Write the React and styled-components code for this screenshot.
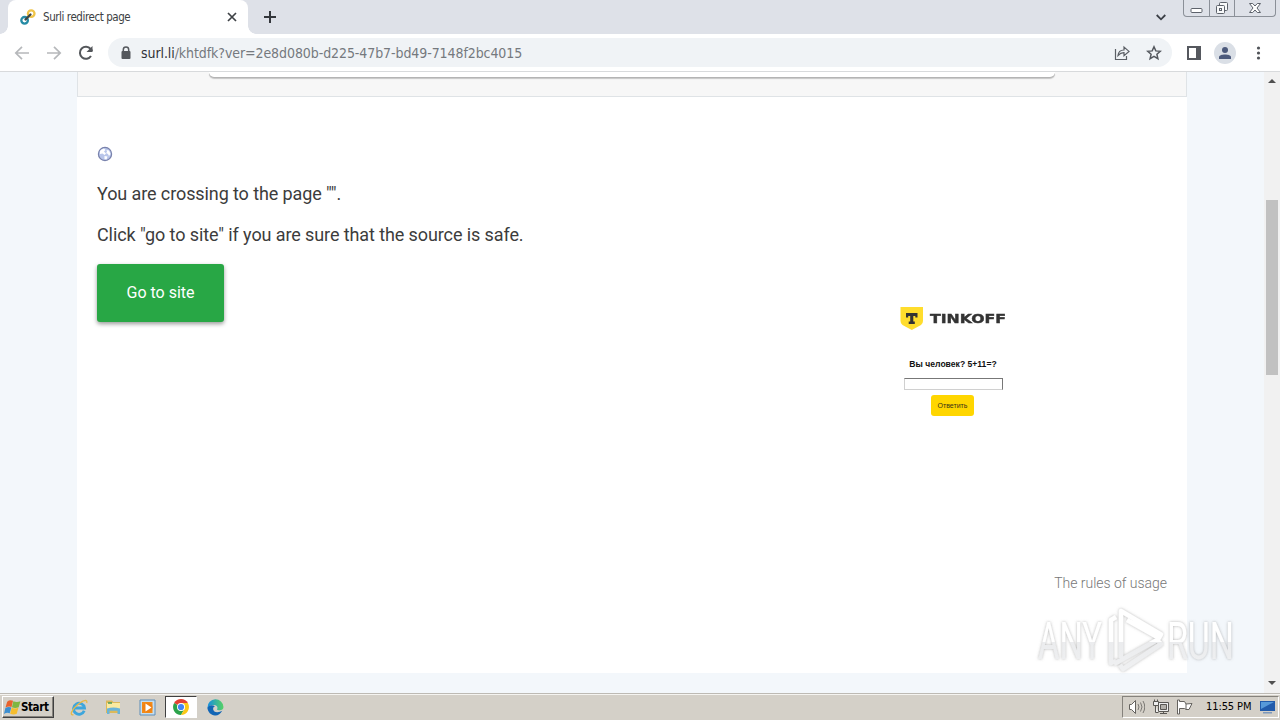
import React from "react";
import styled, { createGlobalStyle } from "styled-components";

const Global = createGlobalStyle`
  * { box-sizing: border-box; }
  body { margin: 0; background: #f3f7fb; overflow: hidden; }
  svg { display: block; flex: none; }
`;

const ui = `"DejaVu Sans Condensed", "DejaVu Sans", "Noto Sans", sans-serif`;

const Screen = styled.div`
  width: 1280px;
  height: 720px;
  display: flex;
  flex-direction: column;
  position: relative;
  overflow: hidden;
  font-family: Roboto, sans-serif;
`;

const TabStrip = styled.header`
  height: 34px;
  flex: none;
  display: flex;
  background: #dee1e8;
  padding-left: 8px;
`;
const Tab = styled.div`
  width: 240px;
  height: 34px;
  display: flex;
  align-items: center;
  padding: 0 10px 0 12px;
  background: #fff;
  border-radius: 8px 8px 0 0;
  position: relative;
  &::before, &::after {
    content: "";
    position: absolute;
    bottom: 0;
    width: 8px;
    height: 8px;
  }
  &::before { left: -8px; background: radial-gradient(circle at 0 0, transparent 7.5px, #fff 8px); }
  &::after { right: -8px; background: radial-gradient(circle at 100% 0, transparent 7.5px, #fff 8px); }
`;
const TabTitle = styled.span`
  flex: 1;
  margin-left: 7px;
  font: 11.5px/16px ${ui};
  letter-spacing: -0.43px;
  color: #3c4043;
  white-space: nowrap;
`;
const NewTab = styled.div`
  padding: 11px 0 0 16px;
  flex: 1;
`;
const Chevron = styled.div`
  padding: 14px 17px 0 0;
`;
const WindowButtons = styled.div`
  display: flex;
  width: 93px;
  height: 17px;
  margin-right: 4px;
  border: 1px solid #8b9098;
  border-top: 0;
  border-radius: 0 0 4px 4px;
`;
const WindowButton = styled.div`
  width: ${(p) => p.$w}px;
  display: flex;
  justify-content: center;
  border-right: ${(p) => (p.$last ? "0" : "1px solid #8b9098")};
`;

const Toolbar = styled.div`
  height: 38px;
  flex: none;
  display: flex;
  align-items: center;
  background: #fff;
  border-bottom: 1px solid #d8dadc;
  padding: 0 12px 0 14px;
`;
const Nav = styled.div`
  display: flex;
  gap: 16px;
  width: 94px;
`;
const AddressBar = styled.div`
  width: 1064px;
  height: 29px;
  display: flex;
  align-items: center;
  background: #f0f3f6;
  border-radius: 15px;
  padding: 0 10px 0 12px;
`;
const Url = styled.span`
  flex: 1;
  margin-left: 9px;
  font: 14px/20px ${ui};
  letter-spacing: -0.08px;
  color: #75797e;
  white-space: nowrap;
  b { font-weight: 400; color: #303236; }
`;
const AddressActions = styled.div`
  display: flex;
  gap: 16px;
`;
const ToolActions = styled.div`
  display: flex;
  align-items: center;
  flex: 1;
  justify-content: space-between;
  padding-left: 14px;
`;
const Avatar = styled.div`
  width: 22px;
  height: 22px;
  border-radius: 50%;
  background: #dadfe6;
  display: flex;
  align-items: center;
  justify-content: center;
`;

const Viewport = styled.main`
  height: 621px;
  flex: none;
  display: flex;
  background: #f3f7fb;
`;
const Page = styled.div`
  width: 1110px;
  height: 601px;
  margin: 0 77px;
  background: #fff;
  flex: none;
`;
const SearchPanel = styled.div`
  height: 25px;
  background: #f7f7f7;
  border: 1px solid #dfe3e6;
  border-top: 0;
  padding: 0 131px;
`;
const SearchEdge = styled.div`
  height: 5px;
  background: #fff;
  border-radius: 0 0 5px 5px;
  box-shadow: 0 1px 0 #b4b4b4, 0 2px 1px #c6c6c6;
`;
const Body = styled.div`
  display: flex;
  justify-content: space-between;
  padding: 49px 20px 0;
`;
const Message = styled.section`
  width: 520px;
`;
const Line = styled.p`
  margin: 0 0 14px;
  font-size: 18px;
  line-height: 27px;
  letter-spacing: -0.1px;
  color: #3c3c3c;
  white-space: nowrap;
`;
const GlobeRow = styled.div`
  height: 34px;
`;
const GoButton = styled.button`
  display: block;
  width: 127px;
  height: 58px;
  margin-top: 16px;
  padding: 0;
  border: 0;
  border-radius: 3px;
  background: #28a745;
  color: #fff;
  font: 16px/24px Roboto, sans-serif;
  box-shadow: 0 2px 4px rgba(0, 0, 0, 0.4);
`;
const Preview = styled.section`
  width: 428px;
  height: 426px;
  padding-top: 161px;
  display: flex;
  flex-direction: column;
  align-items: center;
  font-family: "Liberation Sans", sans-serif;
`;
const Brand = styled.div`
  display: flex;
  align-items: center;
  gap: 6px;
  width: 106px;
  height: 24px;
`;
const BrandName = styled.span`
  font: 700 12px/24px "DejaVu Sans", sans-serif;
  -webkit-text-stroke: 0.4px #333;
  color: #333;
  transform-origin: left center;
  transform: scaleX(1.31);
`;
const Question = styled.div`
  margin-top: 27px;
  font-size: 8.6px;
  line-height: 12px;
  font-weight: 700;
  color: #111;
  white-space: nowrap;
`;
const AnswerField = styled.div`
  width: 99px;
  height: 12px;
  margin-top: 8px;
  border: 1px solid #d0d0d0;
  border-top-color: #777;
  border-right-color: #777;
`;
const AnswerButton = styled.button`
  width: 43px;
  height: 21px;
  margin: 5px 1px 0 0;
  padding: 0;
  border: 0;
  border-radius: 3px;
  background: #ffd600;
  color: #3b3416;
  font: 7px/21px "Liberation Sans", sans-serif;
`;
const Rules = styled.div`
  padding: 2px 20px 0;
  text-align: right;
  font-size: 14px;
  line-height: 18px;
  font-weight: 300;
  letter-spacing: -0.02px;
  color: #777;
`;
const ScrollTrack = styled.div`
  width: 16px;
  height: 621px;
  background: #f1f1f1;
  display: flex;
  flex-direction: column;
  align-items: center;
  padding: 7px 0 8px;
`;
const Thumb = styled.div`
  width: 12px;
  height: 175px;
  margin: 117px 0 auto;
  background: #c1c1c1;
`;

const Watermark = styled.div`
  position: absolute;
  left: 1030px;
  top: 600px;
  width: 210px;
  height: 80px;
`;

const Taskbar = styled.footer`
  height: 27px;
  flex: none;
  display: flex;
  align-items: flex-start;
  background: #d4d0c8;
  border-top: 1px solid #bdbab4;
  box-shadow: inset 0 1px #f5f4f1;
  padding: 2px 1px 0 2px;
`;
const Start = styled.div`
  width: 52px;
  height: 22px;
  display: flex;
  align-items: center;
  gap: 0;
  padding-left: 1px;
  border: 1px solid;
  border-color: #fff #404040 #404040 #fff;
  box-shadow: inset -1px -1px #86837d;
  font: 700 11.5px/16px ${ui};
  letter-spacing: -0.4px;
  color: #000;
`;
const Pinned = styled.div`
  display: flex;
  margin-left: 8px;
  flex: 1;
`;
const TaskItem = styled.div`
  width: ${(p) => (p.$active ? 32 : 34)}px;
  margin-right: ${(p) => (p.$active ? 1 : 0)}px;
  margin-left: ${(p) => (p.$active ? 1 : 0)}px;
  height: 22px;
  display: flex;
  align-items: center;
  justify-content: center;
  border: ${(p) => (p.$active ? "1px solid" : "0")};
  border-color: #404040 #fff #fff #404040;
  background: ${(p) => (p.$active ? "#fff" : "transparent")};
`;
const Tray = styled.div`
  width: 157px;
  height: 22px;
  display: flex;
  align-items: center;
  border: 1px solid;
  border-color: #85827c #fff #fff #85827c;
  padding: 0 3px 0 6px;
  gap: 8px;
`;
const Clock = styled.span`
  flex: 1;
  margin-left: 5px;
  font: 11px/16px ${ui};
  letter-spacing: -0.1px;
  color: #000;
  white-space: nowrap;
`;

const Arrow = ({ flip }) => (
  <svg width="16" height="16" viewBox="0 0 16 16" fill="none" stroke="#b6b8bb" strokeWidth="1.7" transform={flip ? "scale(-1 1)" : undefined}>
    <path d="M15 8H2M8 1.8 1.8 8 8 14.2" />
  </svg>
);

const Favicon = () => (
  <svg width="16" height="16" viewBox="0 0 16 16" fill="none">
    <circle cx="11.2" cy="4.6" r="3.3" stroke="#efc449" strokeWidth="2.3" />
    <circle cx="4.6" cy="11.3" r="3.3" stroke="#258ba5" strokeWidth="2.3" />
    <path d="m5.500 10.500 5-5" stroke="#3e4646" strokeWidth="2.3" strokeLinecap="round" />
  </svg>
);

const Flag = () => (
  <svg width="17" height="17" viewBox="0 0 16 16">
    <path d="M3 2.500Q5.500.4 8.500 1.700L7.100 7.500Q4.300 6.400 1.400 8.100z" fill="#e8622d" />
    <path d="M8.800 2Q12 3.500 15.500 2L13.800 7.700Q10.500 9.200 7.500 7.700z" fill="#7fb641" />
    <path d="M1.300 8.500Q4 6.800 6.900 7.900L5.400 13.300Q2.700 12.200 0 14z" fill="#3c8ed0" />
    <path d="M7.300 8.100Q10.400 9.700 13.600 8.100L12 13.900Q8.900 15.300 5.800 13.800z" fill="#f5bd2d" />
  </svg>
);

const Explorer = () => (
  <svg width="18" height="17" viewBox="0 0 18 17" fill="none">
    <path d="M14.2 11.700A5.500 5.500 0 1 1 14.500 9H5" stroke="#3ea6dc" strokeWidth="2.800" />
    <path d="M3.400 15.700C-.4 17 1 11.200 7 6.200S18-.2 16.700 4" stroke="#e7b946" strokeWidth="1.300" />
  </svg>
);
const Folder = () => (
  <svg width="17" height="16" viewBox="0 0 17 16">
    <path d="M1 3V1.500h6L8.300 3H15v11H1z" fill="#dcb95a" />
    <path d="M2 4h13v7H2z" fill="#faeaa0" />
    <path d="M3 4h4" stroke="#4e9c58" strokeWidth="1.5" />
    <path d="M2 15V9.500Q8.500 7.500 15 9.500V15h-2.500v-3.200h-8V15z" fill="#69b4d9" />
  </svg>
);
const Player = () => (
  <svg width="17" height="17" viewBox="0 0 17 17">
    <path d="M1 1h15v15H1z" fill="#c5def0" stroke="#5e8eb9" />
    <path d="M3 3h10.500v11H3z" fill="#f38b18" />
    <circle cx="8.500" cy="8.500" r="5" fill="#f08215" />
    <path d="m6.500 4.500 6 4-6 4z" fill="#fff" />
  </svg>
);
const Chrome = () => (
  <svg width="16" height="16" viewBox="0 0 16 16">
    <path d="M8 8 1.1 4A8 8 0 0 1 14.9 4z" fill="#e34133" />
    <path d="M8 8 1.1 4A8 8 0 0 0 8 16l3.500-6z" fill="#2ca34b" />
    <path d="M8 4h6.900A8 8 0 0 1 8 16l3.500-6z" fill="#fbc816" />
    <circle cx="8" cy="8" r="4" fill="#fff" />
    <circle cx="8" cy="8" r="3.1" fill="#4285f4" />
  </svg>
);
const Edge = () => (
  <svg width="17" height="17" viewBox="0 0 17 17">
    <defs>
      <linearGradient id="edgeTop" x1="0" x2="1"><stop stopColor="#168ee0" /><stop offset="1" stopColor="#56d264" /></linearGradient>
    </defs>
    <path d="M.5 8.5A8 8 0 0 1 16.5 8c0 3-3 3.8-5.8 3-1-.3-.6-.8-.3-1.6C11 7 8.5 5.5 5.5 6 2.8 6.4 1 7.5.5 10z" fill="url(#edgeTop)" />
    <path d="M.5 9C1.5 6.2 5.2 5.4 8 7.2c-3 .7-2.5 6 2.2 6 2 0 3.6-.5 5-1.4C13.5 15.3 10.8 16.7 8 16.5 4 16.2.7 13 .5 9z" fill="#1265b5" />
  </svg>
);

export default function App() {
  return (
    <Screen>
      <Global />
      <TabStrip>
        <Tab>
          <Favicon />
          <TabTitle>Surli redirect page</TabTitle>
          <svg width="12" height="12" viewBox="0 0 12 12" stroke="#3e4246" strokeWidth="1.7"><path d="m2 2 8 8M10 2l-8 8" /></svg>
        </Tab>
        <NewTab>
          <svg width="12" height="12" viewBox="0 0 12 12" stroke="#34373c" strokeWidth="2"><path d="M0 6h12M6 0v12" /></svg>
        </NewTab>
        <Chevron>
          <svg width="10" height="7" viewBox="0 0 10 7" fill="none" stroke="#3c4047" strokeWidth="1.8"><path d="m.7 1 4.3 4.3L9.3 1" /></svg>
        </Chevron>
        <WindowButtons>
          <WindowButton $w={26}>
            <svg width="13" height="16" viewBox="0 0 13 16"><rect x="1" y="8.5" width="11" height="4" rx="1" fill="#fff" stroke="#5d626b" /></svg>
          </WindowButton>
          <WindowButton $w={25}>
            <svg width="14" height="16" viewBox="0 0 14 16" fill="#f8f9fa" stroke="#5d626b"><rect x="4.5" y="2.5" width="8" height="8" rx="1" /><rect x="1.5" y="5.5" width="8" height="8" rx="1" /><rect x="4.5" y="8.5" width="2" height="2" /></svg>
          </WindowButton>
          <WindowButton $w={40} $last>
            <svg width="14" height="16" viewBox="0 0 14 16" fill="#fff" stroke="#5d626b"><path d="M1.5 3.5h3.2L7 6l2.3-2.5h3.2L9 8l3.5 4.5H9.3L7 10l-2.3 2.5H1.5L5 8z" /></svg>
          </WindowButton>
        </WindowButtons>
      </TabStrip>
      <Toolbar>
        <Nav>
          <Arrow />
          <Arrow flip />
          <svg width="16" height="16" viewBox="0 0 16 16" fill="none" stroke="#54575b" strokeWidth="2"><path d="M13 11A6 6 0 1 1 12.6 4L14.3 6" /><path d="M14.5 1v6h-6z" fill="#54575b" stroke="none" /></svg>
        </Nav>
        <AddressBar>
          <svg width="12" height="14" viewBox="0 0 12 14"><path d="M3.3 6V3.8a2.7 2.7 0 0 1 5.4 0V6" fill="none" stroke="#55585d" strokeWidth="1.5" /><rect x="1.5" y="5" width="9" height="8" rx="1" fill="#55585d" /></svg>
          <Url><b>surl.li</b>/khtdfk?ver=2e8d080b-d225-47b7-bd49-7148f2bc4015</Url>
          <AddressActions>
            <svg width="16" height="16" viewBox="0 0 16 16" fill="none" stroke="#5b5f65" strokeWidth="1.2"><path d="M1.5 4v10.5h11V11" /><path d="M4 10.5Q4.5 5 10 5V2l5 4.4-5 4.2v-3Q6.5 7.5 4 10.5z" /></svg>
            <svg width="16" height="16" viewBox="0 0 16 16" fill="none" stroke="#54585e" strokeWidth="1.5"><path d="m8 1.8 1.8 4.1 4.5.4-3.4 3 1 4.4L8 11.4l-3.9 2.3 1-4.4-3.4-3 4.5-.4z" /></svg>
          </AddressActions>
        </AddressBar>
        <ToolActions>
          <svg width="16" height="14" viewBox="0 0 16 14"><rect x="2" y="1" width="12" height="12" fill="#fff" stroke="#55585e" strokeWidth="2" /><path d="M10 1h5v12h-5z" fill="#55585e" /></svg>
          <Avatar>
            <svg width="14" height="14" viewBox="0 0 14 14" fill="#4c5a7c"><circle cx="7" cy="4" r="3" /><path d="M1 13v-2c0-3.5 12-3.5 12 0v2z" /></svg>
          </Avatar>
          <svg width="20" height="14" viewBox="0 0 20 14" fill="#505358"><circle cx="10.500" cy="2" r="1.6" /><circle cx="10.500" cy="7" r="1.6" /><circle cx="10.500" cy="12" r="1.6" /></svg>
        </ToolActions>
      </Toolbar>
      <Viewport>
        <Page>
          <SearchPanel><SearchEdge /></SearchPanel>
          <Body>
            <Message>
              <GlobeRow>
                <svg width="16" height="16" viewBox="0 0 16 16"><circle cx="8" cy="8" r="6.6" fill="#b9c6ea" stroke="#7982ac" strokeWidth="1.2" /><path d="M3 5q1-2 4-2.500L8.500 4 7 5.500l2 2L7.500 9 5.500 7.500 3 8zM9.500 4l2.500.5L13.500 8l-1.500 2-1-2-2-1 1-1zM7.500 10l3 .5-1 3-2-.5z" fill="#fff" /></svg>
              </GlobeRow>
              <Line>You are crossing to the page "".</Line>
              <Line>Click "go to site" if you are sure that the source is safe.</Line>
              <GoButton>Go to site</GoButton>
            </Message>
            <Preview>
              <Brand>
                <svg width="24" height="24" viewBox="0 0 24 24"><path d="M.5 0h22.500v14q0 2.500-2 4L11.800 23 2.500 18q-2-1.500-2-4z" fill="#ffdd2d" /><path d="M6 6h11.500v4.500h-2.200V9h-2v5.500h1.500V17H8.700v-2.500h1.500V9h-2v1.500H6z" fill="#333" /></svg>
                <BrandName>TINKOFF</BrandName>
              </Brand>
              <Question>Вы человек? 5+11=?</Question>
              <AnswerField />
              <AnswerButton>Ответить</AnswerButton>
            </Preview>
          </Body>
          <Rules>The rules of usage</Rules>
        </Page>
        <ScrollTrack>
          <svg width="8" height="4" viewBox="0 0 8 4" fill="#505050"><path d="m0 4 4-4 4 4z" /></svg>
          <Thumb />
          <svg width="8" height="4" viewBox="0 0 8 4" fill="#505050"><path d="m0 0 4 4 4-4z" /></svg>
        </ScrollTrack>
      </Viewport>
      <Taskbar>
        <Start><Flag />Start</Start>
        <Pinned>
          <TaskItem><Explorer /></TaskItem>
          <TaskItem><Folder /></TaskItem>
          <TaskItem><Player /></TaskItem>
          <TaskItem $active><Chrome /></TaskItem>
          <TaskItem><Edge /></TaskItem>
        </Pinned>
        <Tray>
          <svg width="16" height="16" viewBox="0 0 16 16" fill="none" stroke="#64625e"><path d="M.5 5.500h2L6.500 1.500v13L2.500 10.500h-2z" fill="#fff" /><path d="M9 5q2 3 0 6M11.500 3.500q3 4.500 0 9M14 2q3.500 6 0 12" strokeWidth=".8" /></svg>
          <svg width="16" height="16" viewBox="0 0 16 16" fill="#eee" stroke="#595753"><path d="M5.500 3.500h10v9h-10z" /><path d="M7.500 5.500h6v5h-6z" fill="#b3b0aa" /><path d="M7 14.500h7M10.500 12.500v2" /><path d="M1.500.5v2M4.500.5v2M.5 2.500h5v4h-5zM2.500 6.500v7h3" /></svg>
          <svg width="16" height="16" viewBox="0 0 16 16" fill="#fff" stroke="#64625e"><path d="M.5 1v14h2V9.500h5l1.500 1h3l3-6-6 .5-1.500-2.500h-5V1z" /><path d="M9 5v5" /></svg>
          <Clock>11:55 PM</Clock>
          <svg width="15" height="14" viewBox="0 0 15 14"><path d="M0 1h15v10H0z" fill="#225bab" /><path d="M1 2h13L1 9z" fill="#5799d9" /><path d="M3 12h9v1.500H3z" fill="#7d98bb" /></svg>
        </Tray>
      </Taskbar>
      <Watermark>
        <svg width="210" height="80" viewBox="0 0 210 80">
          <defs>
            <linearGradient id="mark" x1="0" y1="0" x2="0" y2="80" gradientUnits="userSpaceOnUse">
              <stop offset=".52" stopColor="#fff" /><stop offset=".52" stopColor="#ebecee" /><stop offset="1" stopColor="#f1f2f3" />
            </linearGradient>
            <filter id="halo" x="-10%" y="-20%" width="120%" height="140%"><feDropShadow dx="0" dy="0" stdDeviation="1.7" floodColor="#777" floodOpacity=".55" /></filter>
          </defs>
          <g filter="url(#halo)" fill="url(#mark)" fontFamily="Roboto, sans-serif" fontWeight="400" fontSize="52">
            <text x="8" y="59" textLength="64" lengthAdjust="spacingAndGlyphs">ANY</text>
            <text x="137" y="59" textLength="67" lengthAdjust="spacingAndGlyphs">RUN</text>
            <g fill="none" stroke="url(#mark)" strokeWidth="4.500" strokeLinejoin="round">
              <path d="M86 17 81 20V63L86 61" />
              <path d="M91 58V11L131 34.500 129 38 97 20" />
              <path d="M84 64 127 40 131 44 93 69 90 65" />
            </g>
          </g>
        </svg>
      </Watermark>
    </Screen>
  );
}
